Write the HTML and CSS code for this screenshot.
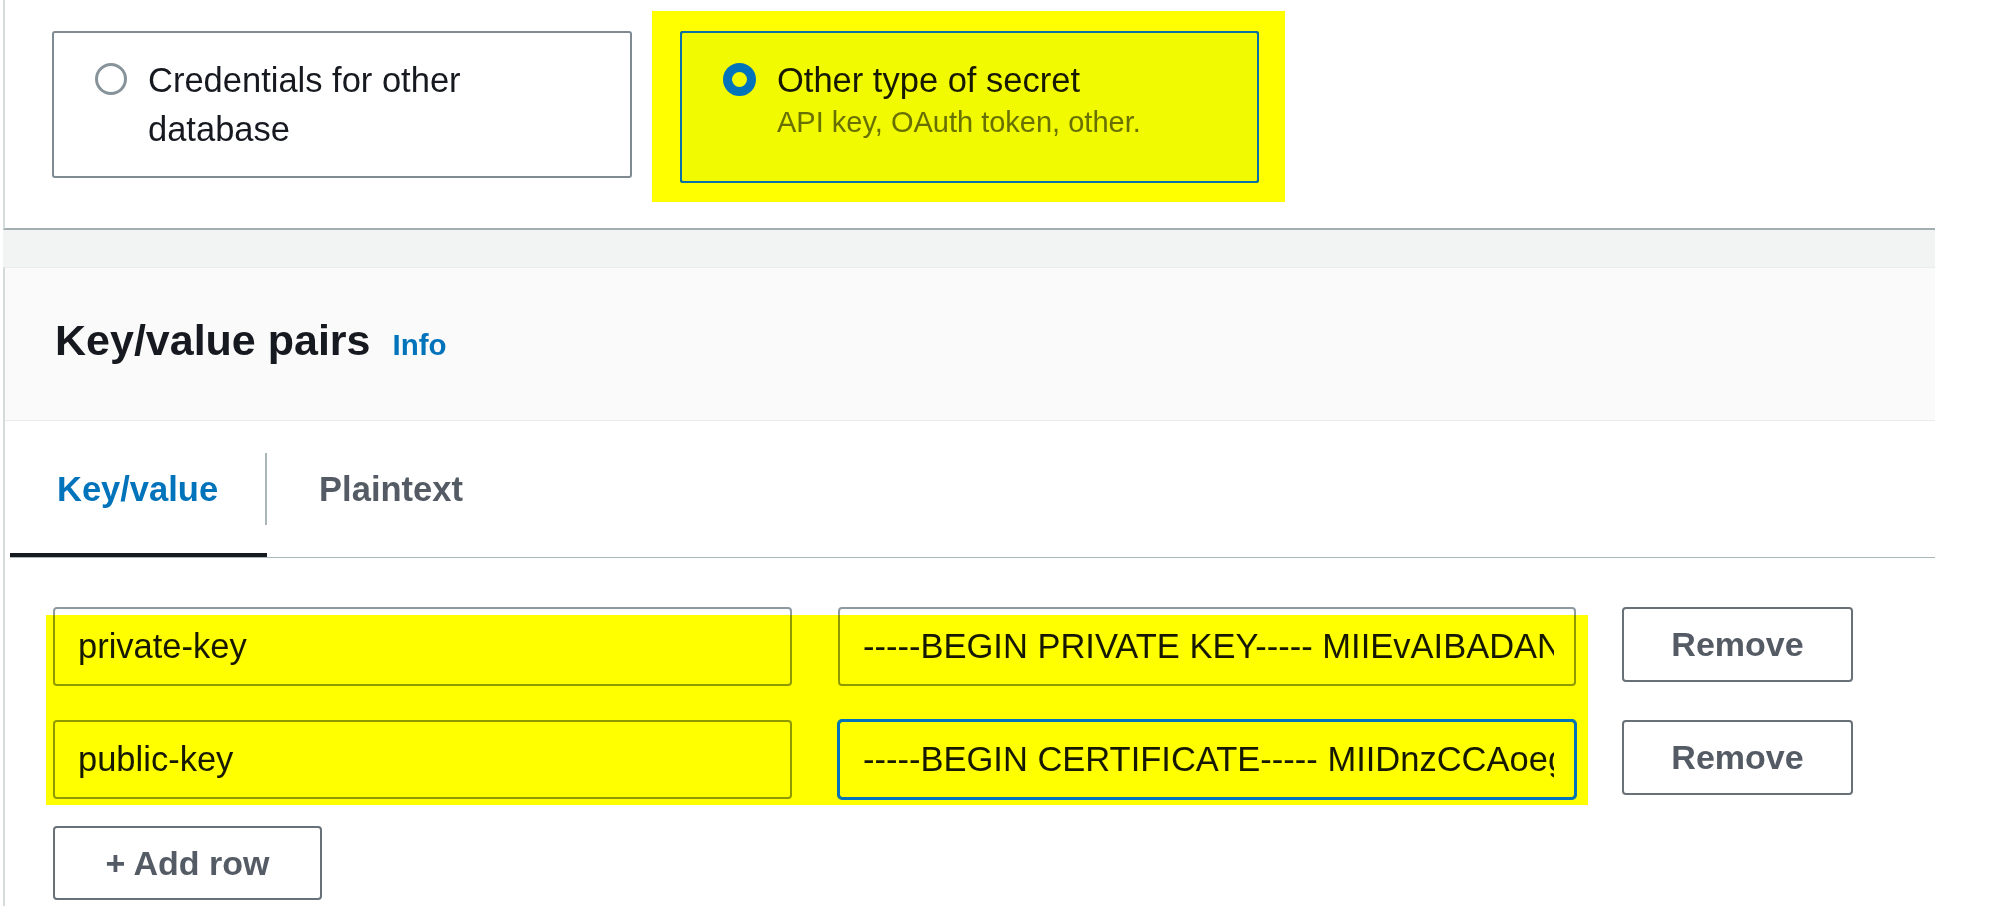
FILE: index.html
```html
<!DOCTYPE html>
<html lang="en">
<head>
<meta charset="utf-8">
<title>Key/value pairs</title>
<link rel="stylesheet" href="styles.css">
</head>
<body>
<div class="page">
  <section class="panel panel-type">
    <div class="tiles">
      <label class="tile tile-plain">
        <span class="radio"></span>
        <span class="tile-text">
          <span class="tile-title">Credentials for other database</span>
        </span>
      </label>
      <label class="tile tile-selected">
        <span class="radio radio-checked"></span>
        <span class="tile-text">
          <span class="tile-title">Other type of secret</span>
          <span class="tile-desc">API key, OAuth token, other.</span>
        </span>
      </label>
    </div>
  </section>

  <section class="panel panel-kv">
    <header class="panel-header">
      <h2 class="panel-title">Key/value pairs</h2>
      <a class="info-link">Info</a>
    </header>
    <div class="tabs">
      <div class="tab tab-active"><span class="tab-label tab-label-first">Key/value</span></div>
      <div class="tab"><span class="tab-label">Plaintext</span></div>
    </div>
    <div class="kv-body">
      <div class="kv-row">
        <input class="field field-key" value="private-key">
        <span class="field-wrap">
          <input class="field field-value" value="-----BEGIN PRIVATE KEY----- MIIEvAIBADANBgkqhkiG9w0BAQEFAASCBKcwggSjAgEAAoIBAQC">
        </span>
        <button class="btn btn-remove">Remove</button>
      </div>
      <div class="kv-row">
        <input class="field field-key" value="public-key">
        <span class="field-wrap field-wrap-focus">
          <input class="field field-value field-focus" value="-----BEGIN CERTIFICATE----- MIIDnzCCAoegAwIBAgIUFz8EJ2y">
        </span>
        <button class="btn btn-remove">Remove</button>
      </div>
      <button class="btn btn-add">+ Add row</button>
    </div>
  </section>
</div>
<div class="marker marker-top"></div>
<div class="marker marker-rows"></div>
</body>
</html>
```

FILE: styles.css
```css
* { box-sizing: border-box; }

html, body {
  margin: 0;
  padding: 0;
  background: #ffffff;
}

body {
  position: relative;
  width: 1994px;
  height: 906px;
  overflow: hidden;
  font-family: "Liberation Sans", Arial, sans-serif;
  color: #16191f;
}

.page {
  margin-left: 3px;
  width: 1932px;
  height: 906px;
  background: #f2f3f3;
  display: flex;
  flex-direction: column;
}

.panel {
  background: #ffffff;
  border-left: 2px solid #d5dbdb;
}

/* ---------- secret type panel ---------- */
.panel-type {
  height: 230px;
  padding: 31px 0 0 47px;
  border-bottom: 2px solid #a3aeb3;
  margin-bottom: 37px;
  flex: none;
}

.tiles {
  display: flex;
  align-items: flex-start;
  gap: 48px;
}

.tile {
  position: relative;
  width: 580px;
  display: flex;
  align-items: flex-start;
  border: 2px solid #7f8b93;
  border-radius: 3px;
  padding: 23px 30px 22px 41px;
  background: #ffffff;
}

.tile-selected {
  width: 579px;
  border-color: #0073bb;
  background: #f1faff;
  padding-bottom: 42px;
}

/* blue outline drawn above the highlighter mark */
.tile-selected::after {
  content: "";
  position: absolute;
  inset: -2px;
  border: 2px solid #0a70a8;
  border-radius: 3px;
  z-index: 2;
  pointer-events: none;
}

.radio {
  flex: none;
  width: 32px;
  height: 32px;
  margin-top: 7px;
  margin-right: 21px;
  border-radius: 50%;
  border: 3px solid #87939a;
  background: #ffffff;
}

.radio-checked {
  position: relative;
  z-index: 2;
  width: 33px;
  height: 33px;
  border: 9px solid #0073bb;
  background: transparent;
}

.tile-text {
  display: flex;
  flex-direction: column;
  max-width: 440px;
}

.tile-title {
  font-size: 34.5px;
  line-height: 49px;
  color: #16191f;
}

.tile-desc {
  font-size: 29px;
  line-height: 34px;
  color: #687078;
}

/* ---------- key/value panel ---------- */
.panel-kv {
  flex: 1;
  border-top: 1px solid #eaeded;
}

.panel-header {
  height: 153px;
  display: flex;
  align-items: baseline;
  padding: 45px 0 0 50px;
  background: #fafafa;
  border-bottom: 1px solid #eaeded;
}

.panel-title {
  margin: 0;
  font-size: 43px;
  line-height: 54px;
  font-weight: 700;
  color: #16191f;
}

.info-link {
  margin-left: 22px;
  font-size: 29.5px;
  font-weight: 700;
  color: #0073bb;
}

.tabs {
  display: flex;
  margin-left: 5px;
  border-bottom: 1px solid #aab7b8;
}

.tab {
  padding: 32px 0 28px 0;
  border-bottom: 4px solid transparent;
}

.tab-active {
  border-bottom-color: #16191f;
}

.tab-label {
  display: block;
  height: 72px;
  line-height: 72px;
  padding: 0 48px 0 52px;
  font-size: 34.5px;
  font-weight: 700;
  color: #545b64;
}

.tab-label-first {
  padding-left: 47px;
  padding-right: 47px;
  border-right: 2px solid #aab7b8;
  color: #0073bb;
}

.kv-body {
  padding: 49px 0 0 48px;
  display: flex;
  flex-direction: column;
  align-items: flex-start;
}

.kv-row {
  display: flex;
  align-items: flex-start;
  gap: 46px;
  margin-bottom: 34px;
}

.kv-row + .kv-row {
  margin-bottom: 27px;
}

.field {
  height: 79px;
  padding: 0 20px 0 23px;
  border: 2px solid #8f9aa0;
  border-radius: 4px;
  background: #ffffff;
  font-family: "Liberation Sans", Arial, sans-serif;
  font-size: 34.5px;
  color: #16191f;
  outline: none;
}

.field-key { width: 739px; }
.field-value { width: 738px; display: block; }

.field-wrap {
  position: relative;
  display: block;
}

.field-focus {
  border-color: #0073bb;
}

/* focus ring drawn above the highlighter mark */
.field-wrap-focus::after {
  content: "";
  position: absolute;
  inset: 0;
  border: 2px solid #0073bb;
  border-radius: 4px;
  box-shadow: 0 0 0 1px #0073bb;
  z-index: 2;
  pointer-events: none;
}

.btn {
  height: 75px;
  border: 2px solid #687078;
  border-radius: 4px;
  background: #ffffff;
  font-family: "Liberation Sans", Arial, sans-serif;
  font-size: 34px;
  font-weight: 700;
  color: #545b64;
  padding: 0;
}

.btn-remove { width: 231px; }
.btn-add { width: 269px; height: 74px; }

/* ---------- highlighter marks ---------- */
.marker {
  position: absolute;
  z-index: 1;
  background: #ffff00;
  mix-blend-mode: multiply;
  pointer-events: none;
}

.marker-top {
  left: 652px;
  top: 11px;
  width: 633px;
  height: 191px;
}

.marker-rows {
  left: 46px;
  top: 615px;
  width: 1542px;
  height: 190px;
}
```
